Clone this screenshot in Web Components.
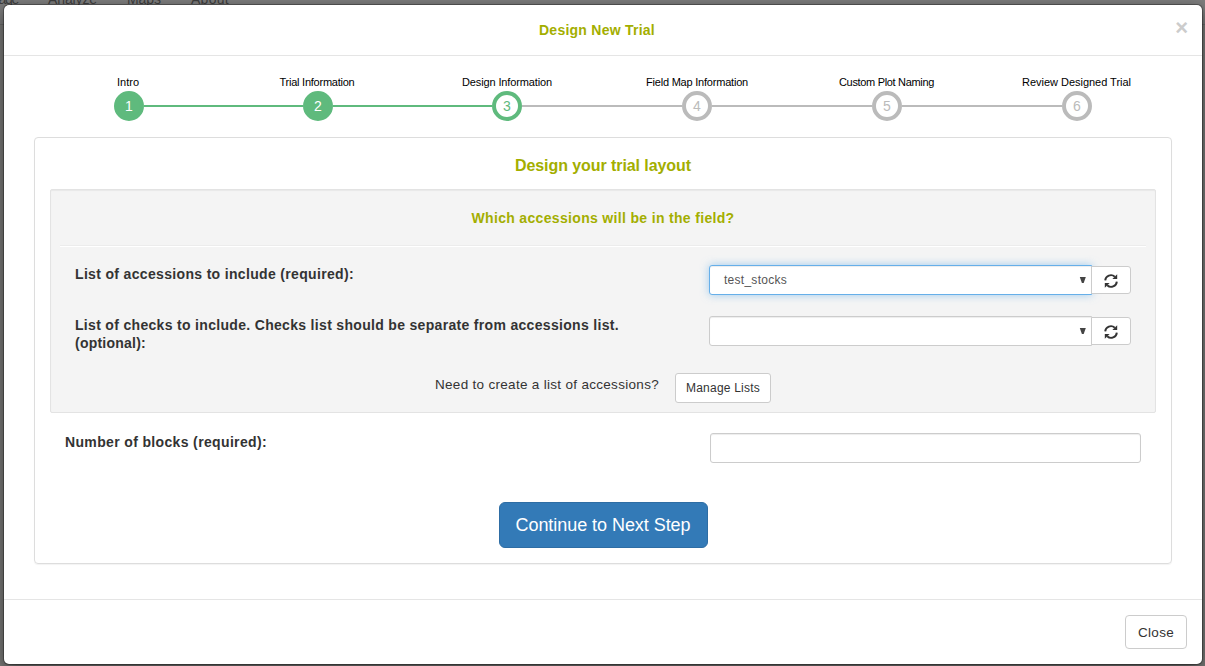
<!DOCTYPE html>
<html lang="en"><head><meta charset="utf-8"><title>Design New Trial</title>
<style>
html,body{margin:0;height:100%;overflow:hidden}
body{font:14px/18px "Liberation Sans",Arial,sans-serif;color:#333;background:#7c7c7a}
</style></head><body>
<trial-page></trial-page>
<script>
const define=(name,html,init)=>customElements.define(name,class extends HTMLElement{
  constructor(){super();this.attachShadow({mode:'open'}).innerHTML=html}
  connectedCallback(){if(init)init.call(this,this.shadowRoot)}
});

/* One line of text whose tracking is spread to reach a given width. */
define('fit-text','<style>:host{display:inline-block;white-space:nowrap;vertical-align:top}</style><slot></slot>',function(){
  const w=+this.getAttribute('w'),n=this.textContent.length;
  this.style.letterSpacing=((w-this.getBoundingClientRect().width)/n)+'px';
});

define('site-nav',`<style>
:host{display:block;height:24px;background:#7e7e7e;border-bottom:1px solid #6c6c6c;overflow:hidden;color:#3f3f3f}
nav{display:flex;margin:-10px 0 0 -25px}
span{display:block}
</style><nav><span style="width:73px"><fit-text w="43">Manage</fit-text></span><span style="width:79px"><fit-text w="49">Analyze</fit-text></span><span style="width:64px"><fit-text w="34">Maps</fit-text></span><span><fit-text w="38">About</fit-text></span></nav>`);

define('work-step',`<style>
:host{display:flex;flex-direction:column;align-items:center;width:30px;flex:none;--c:#bbb;--t:#bbb;--b:#fff}
:host([state=done]){--c:#5fba7d;--t:#fff;--b:#5fba7d}
:host([state=now]){--c:#5fba7d;--t:#5fba7d}
.l{font-size:11px;line-height:13px;height:15px;color:#000;white-space:nowrap}
.n{box-sizing:border-box;width:30px;height:30px;border:4px solid var(--c);border-radius:50%;background:var(--b);color:var(--t);text-align:center;line-height:23px;font-size:14px}
</style><div class="l"><slot></slot></div><div class="n"></div>`,function(r){r.querySelector('.n').textContent=this.getAttribute('n')});

define('step-line','<style>:host{display:block;flex:0 0 160px;height:2px;margin-top:29px;background:#bbb}:host([done]){background:#5fba7d;flex-basis:159px}</style>');

define('work-flow','<style>:host{display:flex;margin:20px 110px 0;height:45px}</style><slot></slot>');

define('ui-button',`<style>
:host{box-sizing:border-box;display:flex;align-items:center;justify-content:center;background:#fff;border:1px solid #ccc;border-radius:3px;font-size:12px;color:#333}
:host([kind=primary]){background:#337ab7;border-color:#2e6da4;color:#fff;font-size:18px;border-radius:6px}
:host([kind=normal]){font-size:13.5px;border-radius:4px}
</style><slot></slot>`);

define('refresh-icon',`<style>:host,svg{display:block}</style>
<svg width="14" height="14" viewBox="0 0 14 14"><g id="a"><path d="M1.2 6.4A5.7 5.6 0 0 1 10.8 2.7" fill="none" stroke="#333" stroke-width="1.9"/><path d="M13.2.2V5H8.4Z" fill="#333"/></g><use href="#a" transform="rotate(180 7 7)"/></svg>`);

define('list-select',`<style>
:host{display:flex;align-items:center;width:422px}
.s{box-sizing:border-box;width:383px;height:30px;display:flex;align-items:center;justify-content:space-between;background:#fff;border:1px solid #ccc;border-radius:3px 0 0 3px;padding:0 5px 0 14px;font-size:12px;color:#555;box-shadow:inset 0 1px 1px rgba(0,0,0,.075)}
:host([focused]) .s{border-color:#66afe9;box-shadow:inset 0 1px 1px rgba(0,0,0,.075),0 0 8px rgba(102,175,233,.6)}
ui-button{width:40px;height:28px;margin-left:-1px;border-radius:0 3px 3px 0;position:relative}
refresh-icon{margin-top:2px}
</style><div class="s"><span><slot></slot></span><svg width="7" height="7"><path d="M.8.1h6L4.7 5.9H2.9z" fill="#444"/></svg></div><ui-button><refresh-icon></refresh-icon></ui-button>`);

define('form-row','<style>:host{display:flex;justify-content:space-between;align-items:flex-start}.l{font-weight:bold}</style><div class="l"><slot name="label"></slot></div><slot></slot>');

define('text-field','<style>:host{display:block;box-sizing:border-box;width:431px;height:30px;background:#fff;border:1px solid #ccc;border-radius:3px;box-shadow:inset 0 1px 1px rgba(0,0,0,.075)}</style>');

define('well-box',`<style>
:host{display:block;box-sizing:border-box;height:224px;background:#f4f4f4;border:1px solid #e3e3e3;border-radius:2px;box-shadow:inset 0 1px 1px rgba(0,0,0,.05);padding:0 9px}
.h{border-bottom:1px solid #ececec;box-shadow:0 1px #fff;display:flex;justify-content:center;padding-top:19px;height:36px;font-weight:bold;color:#a3ae00}
.b{padding:19px 15px 0}
</style><div class="h"><slot name="title"></slot></div><div class="b"><slot></slot></div>`);

define('trial-panel',`<style>
:host{display:block;box-sizing:border-box;height:427px;margin:16px 30px 0;border:1px solid #ddd;border-radius:4px;box-shadow:0 1px 1px rgba(0,0,0,.05);padding:0 15px}
.t{height:51px;display:flex;justify-content:center;align-items:flex-start;padding-top:18px;box-sizing:border-box;font:bold 16px/20px "Liberation Sans",Arial,sans-serif;color:#a3ae00}
</style><div class="t"><slot name="title"></slot></div><slot></slot>`);

define('modal-dialog',`<style>
:host{display:block;box-sizing:border-box;width:1200px;height:661px;border:1px solid rgba(0,0,0,.3);background:#fff;background-clip:padding-box;border-radius:6px;box-shadow:0 5px 15px rgba(0,0,0,.5)}
header{height:50px;border-bottom:1px solid #e5e5e5;display:grid;grid-template-columns:1fr auto 1fr;padding:0 14px 0 16px}
.t{font-weight:bold;color:#a3ae00;padding-top:16px;margin-left:-14px}
.x{justify-self:end;font:bold 22px/21px "Liberation Sans",Arial,sans-serif;color:#ccc;padding-top:12px}
main{height:543px;display:flow-root}
footer{height:64px;border-top:1px solid #e5e5e5;display:flex;justify-content:flex-end;padding:15px 15px 0;box-sizing:border-box}
ui-button{width:62px;height:34px}
ui-button fit-text{padding-top:1px}
</style><header><span></span><div class="t"><slot name="title"></slot></div><div class="x">×</div></header>
<main><slot></slot></main>
<footer><ui-button kind="normal"><fit-text w="36">Close</fit-text></ui-button></footer>`);

define('trial-page',`<style>
:host{display:block;height:666px;overflow:hidden}
modal-dialog{position:absolute;left:3px;top:4px}
.need{display:flex;justify-content:center;gap:16px;margin-top:21px}
.need>fit-text{margin-top:3px;font-size:13.5px}
</style><site-nav></site-nav>
<modal-dialog><fit-text slot="title" w="116">Design New Trial</fit-text>
<work-flow>
<work-step n="1" state="done"><fit-text w="22" style="margin-right:2px">Intro</fit-text></work-step><step-line done></step-line>
<work-step n="2" state="done"><fit-text w="75" style="margin-right:2px">Trial Information</fit-text></work-step><step-line done></step-line>
<work-step n="3" state="now"><fit-text w="90">Design Information</fit-text></work-step><step-line></step-line>
<work-step n="4"><fit-text w="102">Field Map Information</fit-text></work-step><step-line></step-line>
<work-step n="5"><fit-text w="95" style="margin-right:1px">Custom Plot Naming</fit-text></work-step><step-line></step-line>
<work-step n="6"><fit-text w="109" style="margin-right:1px">Review Designed Trial</fit-text></work-step>
</work-flow>
<trial-panel><fit-text slot="title" w="176">Design your trial layout</fit-text>
<well-box><fit-text slot="title" w="263">Which accessions will be in the field?</fit-text>
<form-row><fit-text slot="label" w="279">List of accessions to include (required):</fit-text><list-select focused><fit-text w="63">test_stocks</fit-text></list-select></form-row>
<form-row style="margin-top:21px"><div slot="label"><fit-text w="544">List of checks to include. Checks list should be separate from accessions list.</fit-text><br><fit-text w="71">(optional):</fit-text></div><list-select></list-select></form-row>
<div class="need"><fit-text w="224">Need to create a list of accessions?</fit-text><ui-button style="width:96px;height:30px"><fit-text w="74">Manage Lists</fit-text></ui-button></div>
</well-box>
<form-row style="margin:20px 15px 0"><fit-text slot="label" w="202">Number of blocks (required):</fit-text><text-field></text-field></form-row>
<ui-button kind="primary" style="width:209px;height:46px;margin:39px auto 0"><fit-text w="175">Continue to Next Step</fit-text></ui-button>
</trial-panel>
</modal-dialog>`);
</script>
</body></html>
